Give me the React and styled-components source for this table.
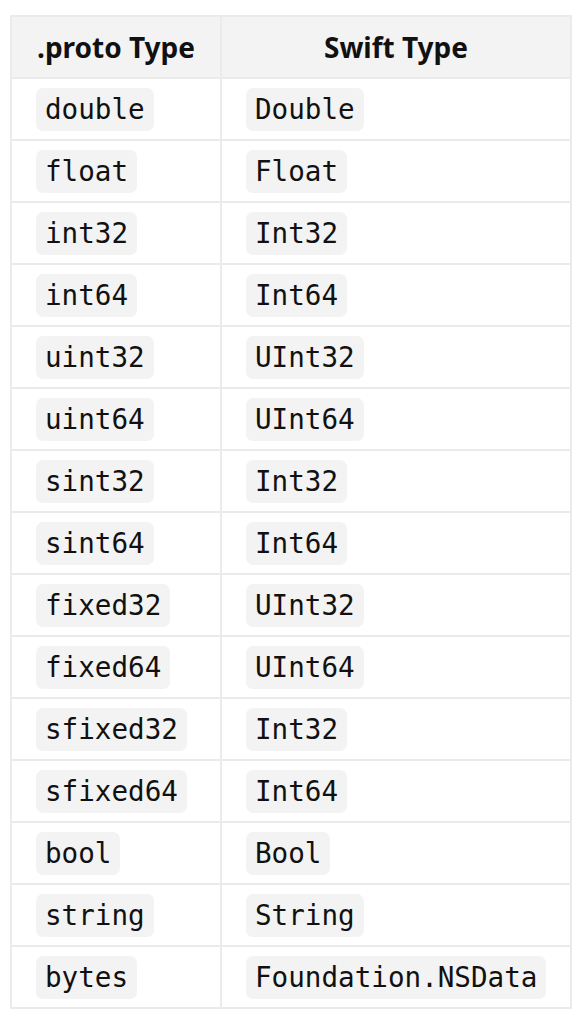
import React from 'react';
import styled, { createGlobalStyle } from 'styled-components';

const Global = createGlobalStyle`
  body {
    margin: 0;
    background: #fff;
    font-family: "Noto Sans", "Open Sans", sans-serif;
    color: #111;
  }
`;

const Page = styled.div`
  padding: 15px 0 0 10px;
`;

const Table = styled.table`
  border-collapse: collapse;
  width: 562px;
  table-layout: fixed;
  border: 2px solid #ebebeb;
`;

const Th = styled.th`
  background: #f3f3f3;
  border: 2px solid #ebebeb;
  height: 60px;
  padding: 0 24px;
  font-size: 28px;
  font-weight: 700;
  text-align: center;
  width: ${p => p.$w || 'auto'};
`;

const Td = styled.td`
  border: 2px solid #ebebeb;
  height: 60px;
  padding: 0 24px;
`;

const Code = styled.code`
  display: inline-block;
  background: #f3f3f3;
  border-radius: 7px;
  padding: 5px 9px;
  font-family: "DejaVu Sans Mono", monospace;
  font-size: 27.6px;
  line-height: 33px;
  color: #111;
`;

const rows = [
  ['double', 'Double'],
  ['float', 'Float'],
  ['int32', 'Int32'],
  ['int64', 'Int64'],
  ['uint32', 'UInt32'],
  ['uint64', 'UInt64'],
  ['sint32', 'Int32'],
  ['sint64', 'Int64'],
  ['fixed32', 'UInt32'],
  ['fixed64', 'UInt64'],
  ['sfixed32', 'Int32'],
  ['sfixed64', 'Int64'],
  ['bool', 'Bool'],
  ['string', 'String'],
  ['bytes', 'Foundation.NSData'],
];

export default function App() {
  return (
    <Page>
      <Global />
      <Table>
        <thead>
          <tr>
            <Th $w="160px">.proto Type</Th>
            <Th>Swift Type</Th>
          </tr>
        </thead>
        <tbody>
          {rows.map(([proto, swift]) => (
            <tr key={proto}>
              <Td><Code>{proto}</Code></Td>
              <Td><Code>{swift}</Code></Td>
            </tr>
          ))}
        </tbody>
      </Table>
    </Page>
  );
}
